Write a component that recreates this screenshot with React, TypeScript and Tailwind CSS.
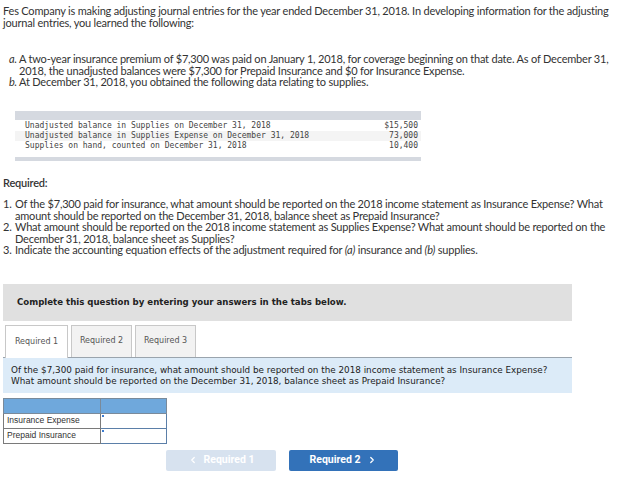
import React from "react";
import { ChevronRight, ChevronLeft } from "lucide-react";

const body = { fontFamily: "Lato, 'Liberation Sans', sans-serif" };
const verdana = { fontFamily: "'DejaVu Sans', Verdana, sans-serif" };
const mono = { fontFamily: "'DejaVu Sans Mono', 'Liberation Mono', monospace" };

export default function App() {
  return (
    <div className="w-[623px] h-[500px] bg-white text-[#333] relative overflow-hidden">
      <div className="px-[3px] pt-[5px] text-[11px] leading-[12px] tracking-[-0.2px] text-[#333]" style={body}>
        <p>
          Fes Company is making adjusting journal entries for the year ended December 31, 2018. In developing information for the adjusting journal entries, you learned the following:
        </p>
        <div className="mt-[24px] pl-[6px] leading-[11.5px]">
          <div className="flex">
            <span className="w-[10px] shrink-0 italic">a.</span>
            <span className="flex-1">
              A two-year insurance premium of $7,300 was paid on January 1, 2018, for coverage beginning on that date. As of December 31, 2018, the unadjusted balances were $7,300 for Prepaid Insurance and $0 for Insurance Expense.
            </span>
          </div>
          <div className="flex">
            <span className="w-[10px] shrink-0 italic">b.</span>
            <span className="flex-1">At December 31, 2018, you obtained the following data relating to supplies.</span>
          </div>
        </div>
      </div>

      <div className="ml-[15px] mt-[23px] w-[406px]" style={mono}>
        <div className="h-[9px] bg-[#d5d9e0]" />
        <div className="text-[8px] leading-[10px] text-[#444] py-[1px]">
          <div className="flex justify-between pl-[10px] pr-[3px]">
            <span>Unadjusted balance in Supplies on December 31, 2018</span>
            <span>$15,500</span>
          </div>
          <div className="flex justify-between pl-[10px] pr-[3px] bg-[#f4f4f4]">
            <span>Unadjusted balance in Supplies Expense on December 31, 2018</span>
            <span>73,000</span>
          </div>
          <div className="flex justify-between pl-[10px] pr-[3px]">
            <span>Supplies on hand, counted on December 31, 2018</span>
            <span>10,400</span>
          </div>
        </div>
        <div className="mt-[5px] h-[4px] bg-[#d5d9e0]" />
      </div>

      <div className="px-[3px] mt-[16px] text-[11px] leading-[11.5px] tracking-[-0.2px] text-[#333]" style={body}>
        <p className="font-semibold">Required:</p>
        <ol className="mt-[10px]">
          <li className="flex">
            <span className="w-[12px] shrink-0">1.</span>
            <span className="flex-1">
              Of the $7,300 paid for insurance, what amount should be reported on the 2018 income statement as Insurance Expense? What amount should be reported on the December 31, 2018, balance sheet as Prepaid Insurance?
            </span>
          </li>
          <li className="flex">
            <span className="w-[12px] shrink-0">2.</span>
            <span className="flex-1">
              What amount should be reported on the 2018 income statement as Supplies Expense? What amount should be reported on the December 31, 2018, balance sheet as Supplies?
            </span>
          </li>
          <li className="flex">
            <span className="w-[12px] shrink-0">3.</span>
            <span className="flex-1">
              Indicate the accounting equation effects of the adjustment required for <i>(a)</i> insurance and <i>(b)</i> supplies.
            </span>
          </li>
        </ol>
      </div>

      <div className="ml-[3px] mt-[28px] w-[569px]" style={verdana}>
        <div className="h-[37px] bg-[#e0e0e0] flex items-center pl-[14px] text-[8.6px] font-bold text-[#222]">
          Complete this question by entering your answers in the tabs below.
        </div>
        <div className="mt-[4px] flex items-end pl-[2px] gap-[3px] h-[32px]">
          <div className="h-[33px] w-[63px] border border-[#c8c8c8] border-b-0 bg-white flex items-center justify-center text-[8px] text-[#555] relative top-[1px]">
            Required 1
          </div>
          <div className="h-[32px] w-[61px] border border-[#c8c8c8] border-b-0 bg-[#f2f2f2] flex items-center justify-center text-[8px] text-[#555]">
            Required 2
          </div>
          <div className="h-[32px] w-[61px] border border-[#c8c8c8] border-b-0 bg-[#f2f2f2] flex items-center justify-center text-[8px] text-[#555]">
            Required 3
          </div>
        </div>
        <div className="h-[36px] bg-[#dcebf8] border-t border-[#9aa4ad] pl-[8px] pt-[7px] text-[8.8px] leading-[11px] text-[#222]">
          <p>Of the $7,300 paid for insurance, what amount should be reported on the 2018 income statement as Insurance Expense?</p>
          <p>What amount should be reported on the December 31, 2018, balance sheet as Prepaid Insurance?</p>
        </div>
      </div>

      <div className="ml-[3px] mt-[5px]" style={{ fontFamily: "'Liberation Sans', Arial, sans-serif" }}>
        <table className="border-collapse text-[8.5px] text-[#333]">
          <tbody>
            <tr className="h-[15px]">
              <td className="w-[97px] bg-[#6fa8dc] border border-[#7a8a9a]" />
              <td className="w-[66px] bg-[#6fa8dc] border border-[#7a8a9a]" />
            </tr>
            <tr className="h-[15px]">
              <td className="border border-[#7a7a7a] pl-[3px]">Insurance Expense</td>
              <td className="border border-[#5b7fa8] bg-white relative">
                <span className="absolute left-[1px] top-[1px] w-[2px] h-[2px] bg-[#3b7bd0]" />
              </td>
            </tr>
            <tr className="h-[15px]">
              <td className="border border-[#7a7a7a] pl-[3px]">Prepaid Insurance</td>
              <td className="border border-[#5b7fa8] bg-white relative">
                <span className="absolute left-[1px] top-[1px] w-[2px] h-[2px] bg-[#3b7bd0]" />
              </td>
            </tr>
          </tbody>
        </table>
      </div>

      <div className="mt-[6px] flex pl-[166px] gap-[13px]" style={{ fontFamily: "Roboto, 'Liberation Sans', sans-serif" }}>
        <div className="w-[110px] h-[21px] bg-[#d7e2ef] rounded-[2px] flex items-center justify-center text-[10.5px] font-bold text-white gap-[6px]">
          <ChevronLeft size={10} strokeWidth={3} />
          <span>Required 1</span>
        </div>
        <div className="w-[109px] h-[21px] bg-[#3372b9] rounded-[2px] flex items-center justify-center text-[10.5px] font-bold text-white gap-[7px]">
          <span>Required 2</span>
          <ChevronRight size={10} strokeWidth={3} />
        </div>
      </div>
    </div>
  );
}
